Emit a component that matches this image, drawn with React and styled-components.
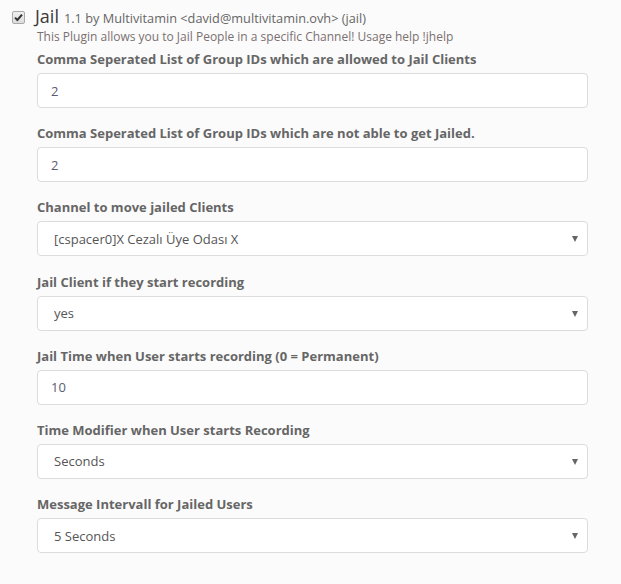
import styled, { createGlobalStyle } from 'styled-components';

const GlobalStyle = createGlobalStyle`
  body {
    margin: 0;
    background: #fbfbfb;
    font-family: 'Open Sans', 'Noto Sans', sans-serif;
  }
`;

const Plugin = styled.div`
  padding: 7px 0 0 12px;
  width: 576px;
`;

const Header = styled.label`
  display: flex;
  align-items: center;
  gap: 10px;
  height: 20px;
`;

const CheckBox = styled.span`
  box-sizing: border-box;
  display: flex;
  align-items: center;
  justify-content: center;
  width: 13px;
  height: 13px;
  background: linear-gradient(#f0f0f0, #dcdcdc);
  border: 1px solid #a9a9a9;
  border-radius: 2px;
`;

const Title = styled.span`
  font-size: 18px;
  color: #3a3a3a;
  line-height: 20px;
`;

const Meta = styled.small`
  font-size: 12.75px;
  color: #666;
  margin-left: 5px;
`;

const Body = styled.div`
  padding-left: 25px;
`;

const Description = styled.p`
  margin: 1px 0 5px;
  font-size: 12px;
  line-height: 17px;
  color: #7a7070;
`;

const Group = styled.div`
  margin-bottom: ${({ $last }) => ($last ? '0' : '16.2px')};
`;

const Label = styled.label`
  display: block;
  font-size: 13px;
  font-weight: 700;
  line-height: 18px;
  color: #666;
  margin-bottom: 5px;
`;

const Field = styled.input`
  box-sizing: border-box;
  display: block;
  width: 551px;
  height: 35px;
  padding: 0 13px;
  font-family: inherit;
  font-size: 13px;
  color: #5b5b72;
  background: #fff;
  border: 1px solid #dcdcdc;
  border-radius: 4px;
  outline: none;
`;

const SelectWrap = styled.div`
  position: relative;
  width: 551px;

  &::after {
    content: '';
    position: absolute;
    right: 10px;
    top: 15px;
    border-left: 3.5px solid transparent;
    border-right: 3.5px solid transparent;
    border-top: 6px solid #666;
    pointer-events: none;
  }
`;

const Select = styled.select`
  box-sizing: border-box;
  display: block;
  width: 100%;
  height: 35px;
  padding: 0 16px;
  appearance: none;
  font-family: inherit;
  font-size: 13px;
  color: #555;
  background: #fff;
  border: 1px solid #dcdcdc;
  border-radius: 4px;
  outline: none;
`;

const fields = [
  { label: 'Comma Seperated List of Group IDs which are allowed to Jail Clients', value: '2' },
  { label: 'Comma Seperated List of Group IDs which are not able to get Jailed.', value: '2' },
  { label: 'Channel to move jailed Clients', value: '[cspacer0]X Cezalı Üye Odası X', select: true },
  { label: 'Jail Client if they start recording', value: 'yes', select: true },
  { label: 'Jail Time when User starts recording (0 = Permanent)', value: '10' },
  { label: 'Time Modifier when User starts Recording', value: 'Seconds', select: true },
  { label: 'Message Intervall for Jailed Users', value: '5 Seconds', select: true },
];

const App = () => {
  return (
    <>
      <GlobalStyle />
      <Plugin>
        <Header>
          <CheckBox>
            <svg width="9" height="9" viewBox="0 0 9 9">
              <path d="M1 4.6 L3.4 7 L8 1.6" fill="none" stroke="#333" strokeWidth="2" />
            </svg>
          </CheckBox>
          <Title>
            Jail
            <Meta>1.1 by Multivitamin &lt;david@multivitamin.ovh&gt; (jail)</Meta>
          </Title>
        </Header>
        <Body>
          <Description>
            This Plugin allows you to Jail People in a specific Channel! Usage help !jhelp
          </Description>
          {fields.map(({ label, value, select }, i) => (
            <Group key={i} $last={i === fields.length - 1}>
              <Label>{label}</Label>
              {select ? (
                <SelectWrap>
                  <Select defaultValue={value}>
                    <option>{value}</option>
                  </Select>
                </SelectWrap>
              ) : (
                <Field type="text" defaultValue={value} />
              )}
            </Group>
          ))}
        </Body>
      </Plugin>
    </>
  );
};

export default App;
